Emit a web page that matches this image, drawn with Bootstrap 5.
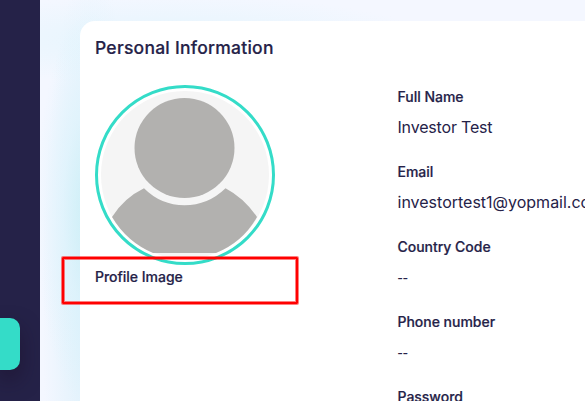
<!DOCTYPE html>
<html lang="en">
<head>
<meta charset="utf-8">
<meta name="viewport" content="width=device-width, initial-scale=1">
<title>Personal Information</title>
<link href="https://cdn.jsdelivr.net/npm/bootstrap@5.3.0/dist/css/bootstrap.min.css" rel="stylesheet">
<style>
body{font-family:Inter,"Liberation Sans",sans-serif;color:#252248;background:#f4f7ff}
.side-bar{width:40px;background:#252248;padding-top:318px}
.side-active{width:20px;height:52px;background:#34dcc8;border-radius:0 10px 10px 0;box-shadow:0 10px 20px rgba(25,12,35,.5)}
.content-area{padding:21px 0 0 40px;background:
 radial-gradient(ellipse 54px 200px at 50px 210px,rgba(200,238,245,.85),rgba(215,242,251,.5) 50%,transparent),
 radial-gradient(ellipse 260px 45px at 130px 40px,#e4f5fd,transparent),
 radial-gradient(ellipse 48px 340px at 50px 300px,rgba(218,240,250,.95),transparent),#f4f7ff}
.profile-card{width:700px;height:500px;border-radius:15px;padding:15px}
.panel-title{font-size:17.5px;line-height:24px;font-weight:500;letter-spacing:.25px;-webkit-text-stroke:.2px}
.avatar-ring{width:180px;height:180px;border:3px solid #34dcc8;padding:3px}
.col-photo{width:302.5px;padding-top:25px}
.col-info{padding-top:25px}
.field-label{font-size:14px;line-height:24px;font-weight:500;letter-spacing:-.02px;-webkit-text-stroke:.2px}
.field-value{font-size:16px;line-height:24px;padding-top:6px;height:51px;letter-spacing:-.18px}
.email-value{letter-spacing:0}
.empty-value{font-family:"Open Sans",sans-serif;letter-spacing:0}
.mark-box{left:62px;top:257px;width:236px;height:47px;border:2px solid #f00;box-shadow:0 0 0 1px rgba(255,0,0,.5),inset 0 0 0 1px rgba(255,0,0,.5);border-radius:1px}
</style>
<script src="https://cdn.jsdelivr.net/npm/bootstrap@5.3.0/dist/js/bootstrap.bundle.min.js"></script>
</head>
<body class="vh-100 overflow-hidden position-relative">
<div class="d-flex h-100">
  <aside class="side-bar flex-shrink-0 overflow-hidden"><div class="side-active"></div></aside>
  <main class="content-area flex-grow-1 overflow-hidden">
    <section class="profile-card bg-white">
      <h1 class="panel-title mb-0">Personal Information</h1>
      <div class="d-flex">
        <div class="col-photo flex-shrink-0">
          <div class="avatar-ring rounded-circle">
            <svg class="d-block" width="168" height="168" viewBox="0 0 168 168" aria-label="Profile image">
              <circle cx="84" cy="84" r="84" fill="#f5f5f5"/>
              <circle cx="83.5" cy="57" r="50" fill="#b2b1af"/>
              <path fill="#b2b1af" d="M43 97.300Q23 107 11 126Q26 151 52 162H115Q142 151 156 126Q143 107 124.500 97.300Q107 114.300 83.500 114.300Q60 114.300 43 97.300Z"/>
            </svg>
          </div>
          <div class="field-label">Profile Image</div>
        </div>
        <div class="col-info text-nowrap">
          <div class="field-label">Full Name</div><div class="field-value">Investor Test</div>
          <div class="field-label">Email</div><div class="field-value email-value">investortest1@yopmail.com</div>
          <div class="field-label">Country Code</div><div class="field-value empty-value">--</div>
          <div class="field-label">Phone number</div><div class="field-value empty-value">--</div>
          <div class="field-label">Password</div>
        </div>
      </div>
    </section>
  </main>
</div>
<div class="mark-box position-absolute"></div>
</body>
</html>
